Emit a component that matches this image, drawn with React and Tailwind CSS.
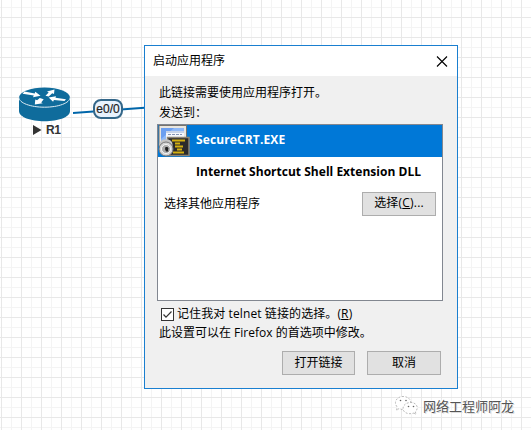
function RouterIcon() {
  return (
    <svg width="54" height="36" viewBox="0 0 54 36">
      <path
        d="M1 10.500v13.500c0 6 11.500 10.300 25.500 10.300S52 30 52 24V10.500z"
        fill="#0f6c9c"
      />
      <ellipse cx="26.500" cy="10.500" rx="25.500" ry="10" fill="#0f6c9c" />
      <path
        d="M1 10.500c0 5.500 11.500 9.700 25.500 9.700S52 16 52 10.500"
        fill="none"
        stroke="#dcebf3"
        strokeWidth="1"
      />
      <g fill="#fff">
        <path d="M6.500 4.600l10.200 1.900.6-1.700 5.200 4-7.500 1.400.8-1.600L4.500 6.700z" />
        <path d="M48 12.200l-10.500-1.400.5-1.600-7.400 1.200 4.500 4.300.8-1.700L46.500 14z" />
        <path d="M27.500 8.700l3.200-3.300-1.700-.9L36.500 2.500 36 7l-1.800-.7-3.500 3.200z" />
        <path d="M25.700 12.200l-2.500 3.200 1.600.8-8 1.300.5-4.900 1.800.7 2.700-2.300z" />
      </g>
    </svg>
  );
}

function TerminalIcon() {
  return (
    <svg width="32" height="32" viewBox="0 0 32 32" className="shrink-0">
      <path d="M1 .5h27.500v21H1z" fill="#e9e6df" stroke="#77736d" />
      <path d="M3 3h23v13H3z" fill="#8fb9f8" />
      <path d="M3 3h13L3 14z" fill="#6c9ff0" />
      <path d="M8 6.500h18v11H8z" fill="#f5f7fc" />
      <path d="M8 6h18v2H8z" fill="#c7d3e8" />
      <path d="M10 9.500h14M14 12.500h10" stroke="#8494b4" strokeDasharray="3 1" />
      <path d="M9.500 12.500h21.500v18H9.500z" fill="#2b2b2b" stroke="#8b8374" strokeWidth="1.500" />
      <path
        d="M14 15.500h13M17 18.500h5M17 21.500h8M19 24.500h5M15 27.500h11"
        stroke="#d4b011"
        strokeWidth="2"
      />
      <path
        d="M3 21v-2c0-4.500 10-4.500 10 0v2"
        fill="none"
        stroke="#c4c4c4"
        strokeWidth="3"
      />
      <circle cx="8" cy="24" r="7" fill="#d4d4d4" stroke="#777" />
      <circle cx="8" cy="24" r="4.500" fill="#aaa" stroke="#f8f8f8" />
      <path d="M7.500 22h2l1 1.500-.5 1.500.5 1.500H8l-1-2.500z" fill="#202020" />
    </svg>
  );
}

function WeChatIcon() {
  return (
    <svg
      width="25"
      height="22"
      viewBox="0 0 25 22"
      fill="#fff"
      stroke="#aaa"
      strokeWidth="0.800"
      strokeDasharray="2 1.500"
    >
      <path d="M5 13.500l-2.500 2 .7-3.400C-1 7 3 1.500 9 1.500c5 0 8 3 8 6.500 0 4-4 7-9 6.500z" />
      <path d="M20 18l2 1.500-.6-2.700c4-4 1-9.300-4.400-9.300-5 0-8 2.700-8 6 0 4 5 6.500 11 4.500z" />
      <g fill="#666" stroke="none">
        <circle cx="6.500" cy="5.500" r="0.800" />
        <circle cx="12" cy="5.500" r="0.800" />
        <circle cx="14.500" cy="11.500" r="0.800" />
        <circle cx="19.500" cy="11.500" r="0.800" />
      </g>
    </svg>
  );
}

function DialogButton({ className = "", children }) {
  return (
    <button
      className={`h-6 border border-[#adadad] bg-[#e1e1e1] text-[12px] leading-[20px] pb-[1px] ${className}`}
    >
      {children}
    </button>
  );
}

function LaunchDialog() {
  return (
    <div className="absolute left-[144px] top-[45px] w-[314px] h-[344px] flex flex-col border border-[#1a7fd0] bg-[#f0f0f0] text-[12px] text-black whitespace-nowrap">
      <div className="h-[30px] shrink-0 bg-white flex items-center justify-between pl-2 pr-[9px]">
        <span>启动应用程序</span>
        <svg width="12" height="11" viewBox="0 0 12 11" stroke="#000" strokeWidth="1.100">
          <path d="M1 .5l10 10M11 .5l-10 10" />
        </svg>
      </div>

      <div className="flex-1 flex flex-col pl-3 pr-[14px]">
        <p className="mt-[7px] pl-[2px] h-5 leading-[20px]">此链接需要使用应用程序打开。</p>
        <p className="pl-[2px] h-5 leading-[20px]">发送到：</p>

        {/* Handler list */}
        <div className="mt-[1px] w-[286px] h-[177px] shrink-0 border border-[#828790] bg-white">
          <div className="h-8 bg-[#0078d7] text-white flex items-center">
            <TerminalIcon />
            <span className="ml-[6px] pb-[3px] font-bold tracking-[0.12px]">SecureCRT.EXE</span>
          </div>
          <div className="h-8 pl-[38px] pb-[3px] flex items-center font-bold tracking-[0.02px]">
            Internet Shortcut Shell Extension DLL
          </div>
          <div className="h-[28px] pl-[6px] pr-[6px] flex items-center justify-between">
            <span className="pt-[2px]">选择其他应用程序</span>
            <DialogButton className="w-[74px] mt-[1px] tracking-[0.2px]">
              选择(<span className="underline underline-offset-1">C</span>)...
            </DialogButton>
          </div>
        </div>

        <label className="mt-[3px] pl-1 h-5 shrink-0 flex items-center">
          <span className="w-[13px] h-[13px] border border-[#333] bg-white flex items-center justify-center">
            <svg width="11" height="11" viewBox="0 0 11 11" fill="none" stroke="#333" strokeWidth="1.200">
              <path d="M1.500 5.500l2.500 2.700L9.500 2.500" />
            </svg>
          </span>
          <span className="ml-[3px] tracking-[0.1px]">
            记住我对 telnet 链接的选择。(<span className="underline underline-offset-1">R</span>)
          </span>
        </label>
        <p className="pl-[2px] h-[18px] leading-[18px]">此设置可以在 Firefox 的首选项中修改。</p>

        <div className="mt-[9px] pr-[2px] flex justify-end gap-3">
          <DialogButton className="w-[73px]">打开链接</DialogButton>
          <DialogButton className="w-[74px]">取消</DialogButton>
        </div>
      </div>
    </div>
  );
}

function App() {
  return (
    <div className="relative w-[531px] h-[430px] overflow-hidden bg-white font-['Open_Sans','Noto_Sans_CJK_SC',sans-serif]">
      {/* Canvas grid: faint lines every 10px, stronger every 20px */}
      <div className="absolute inset-0 bg-[linear-gradient(to_right,#e8e8e8_1px,transparent_1px),linear-gradient(to_bottom,#e8e8e8_1px,transparent_1px),linear-gradient(to_right,#f4f4f4_1px,transparent_1px),linear-gradient(to_bottom,#f4f4f4_1px,transparent_1px)] bg-[size:20px_20px,20px_20px,20px_20px,20px_20px] bg-[position:1px_0,0_17px,11px_0,0_7px]" />

      {/* Router node and its link */}
      <svg className="absolute left-[73px] top-[100px]" width="75" height="20">
        <path d="M0 13L75 7.500" stroke="#0066aa" strokeWidth="2" />
      </svg>
      <div className="absolute left-[18px] top-[87px]">
        <RouterIcon />
      </div>
      <div className="absolute left-[33px] top-[123px] h-[14px] flex items-center gap-1 font-['Liberation_Sans',sans-serif] font-bold text-[12px] leading-[14px] tracking-[-0.5px] text-[#333]">
        <svg width="9" height="10" viewBox="0 0 9 10" fill="#333">
          <path d="M0 0l8.500 5-8.500 5z" />
        </svg>
        R1
      </div>
      <div className="absolute left-[93px] top-[99px] w-[30px] h-5 flex items-center justify-center rounded-[8px] border-2 border-[#346789] bg-[#e8f2fd] font-['Liberation_Sans',sans-serif] text-[12px] text-[#222] [-webkit-text-stroke:0.2px_#222]">
        e0/0
      </div>

      <LaunchDialog />

      {/* Watermark */}
      <div className="absolute left-[394px] top-[395px] flex items-center gap-1 text-[13px] leading-[22px] text-[#555] whitespace-nowrap">
        <WeChatIcon />
        <span className="[text-shadow:-1px_-1px_0_#fff,1px_1px_0_#ddd]">网络工程师阿龙</span>
      </div>
    </div>
  );
}

export default App;
